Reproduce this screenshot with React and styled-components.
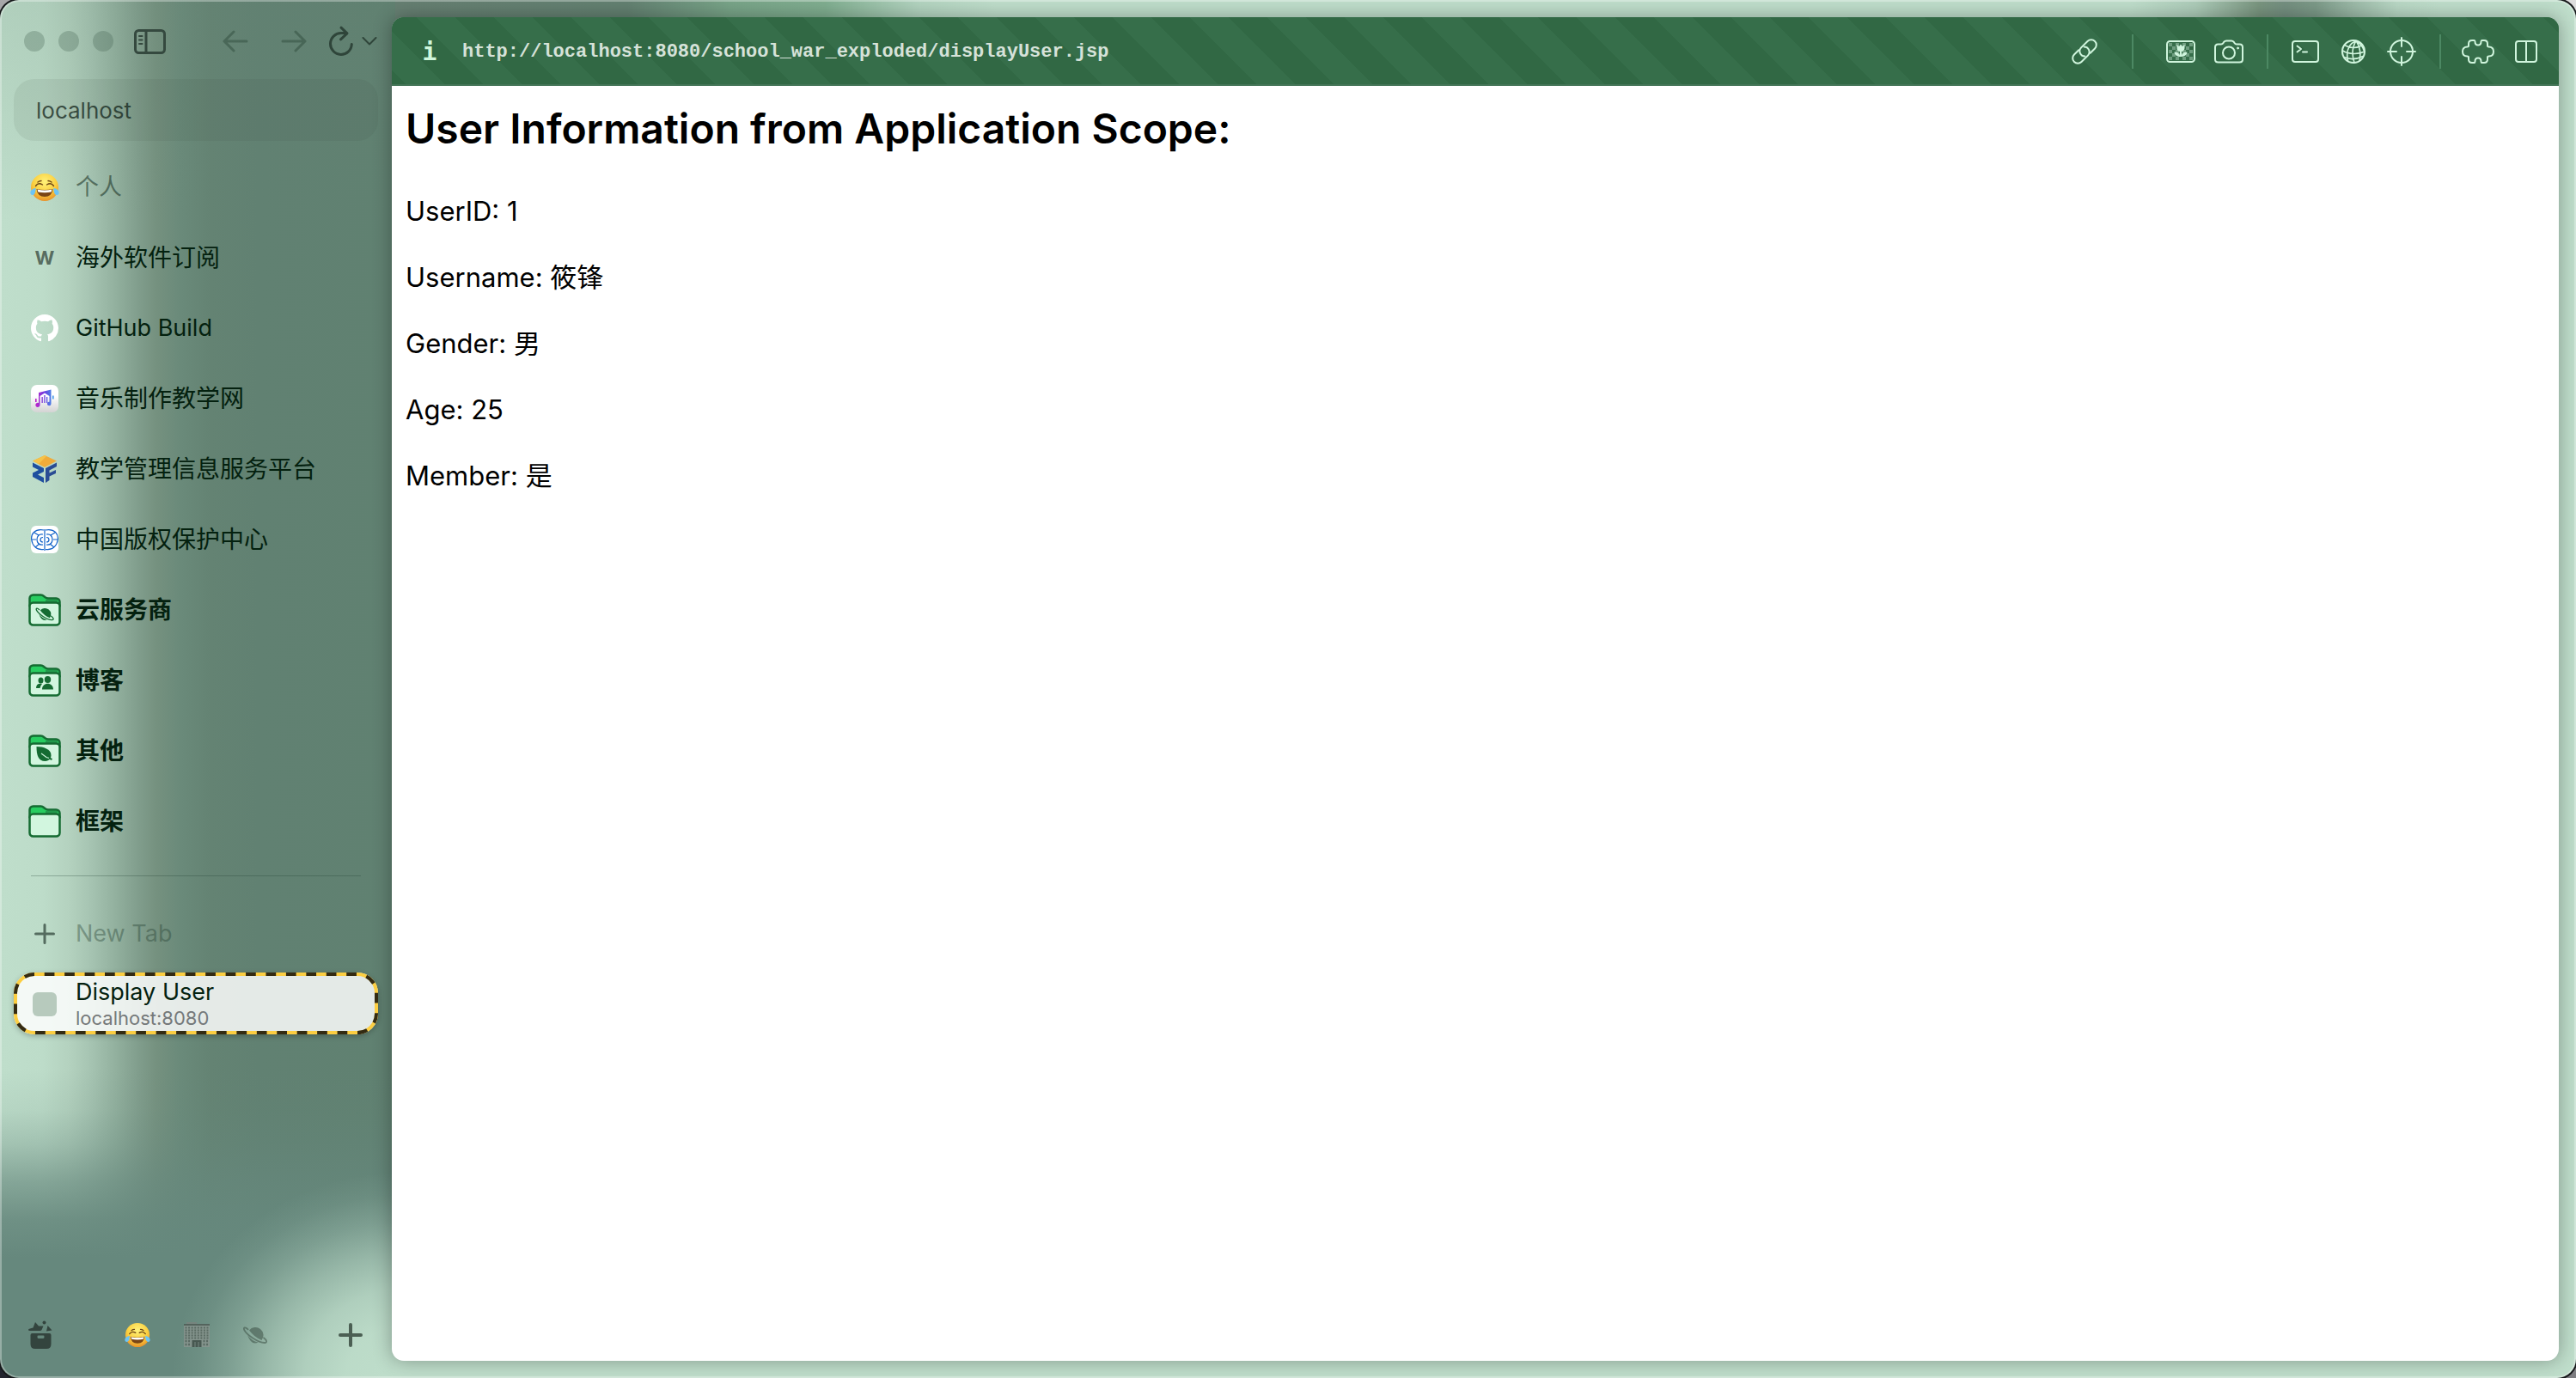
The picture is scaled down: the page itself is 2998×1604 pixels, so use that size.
import React from "react";
import styled, { createGlobalStyle, css } from "styled-components";

const GlobalStyle = createGlobalStyle`
  *, *::before, *::after { box-sizing: border-box; }
  body {
    margin: 0;
    background: linear-gradient(20deg, #23242e 0%, #23242e 10%, #9a9a9c 50%, #dedede 100%);
    font-family: Inter, "Noto Sans CJK SC", sans-serif;
  }
  button, input { font: inherit; }
  ul { list-style: none; margin: 0; padding: 0; }
`;

const ink = "#04210f";

const Window = styled.div`
  display: flex;
  min-height: 100vh;
  border: 2px solid rgba(255, 255, 255, 0.32);
  border-radius: 22px;
  box-shadow: 0 0 0 2px #16181a;
  background-color: #bfdecb;
  background-origin: border-box;
  background-repeat: no-repeat;
  background-image:
    radial-gradient(ellipse 270px 240px at 470px 100%, #bfdecb 0%, rgba(191, 222, 203, 0.96) 25%, rgba(191, 222, 203, 0.82) 43%, rgba(191, 222, 203, 0.55) 60%, rgba(191, 222, 203, 0.26) 76%, rgba(191, 222, 203, 0.08) 89%, rgba(191, 222, 203, 0) 100%),
    linear-gradient(to bottom, rgba(102, 136, 125, 0) 0%, rgba(102, 136, 125, 0.1) 22%, rgba(102, 136, 125, 0.32) 40%, rgba(102, 136, 125, 0.66) 60%, rgba(102, 136, 125, 0.9) 80%, #66887d 100%),
    linear-gradient(#66887d, #66887d),
    linear-gradient(to bottom, rgba(100, 130, 113, 0.16), rgba(100, 130, 113, 0) 100%),
    linear-gradient(to right, #bfdecb 0, #bddcc9 50px, #b4d2bf 80px, #a6c4b2 105px, #92b09e 135px, #819e8d 160px, #75917f 182px, #6a8a7a 210px, #648373 245px, #618172 300px, #608171 460px),
    linear-gradient(to right, #667f72 0, #638171 270px, #78a488 390px, #80ae90 500px, #b3d4c0 610px, #bfdecb 700px),
    linear-gradient(to right, #bfdecb 0, #adccb9 75px, #79957f 150px, #748f80 180px, #7c9a88 215px, #9cbaa8 260px, #b9d8c5 310px, #bfdecb 360px);
  background-size:
    100% 100%,
    460px 220px,
    460px 140px,
    460px 260px,
    460px 100%,
    700px 60px,
    360px 60px;
  background-position:
    0 0,
    left 0 bottom 140px,
    left 0 bottom 0,
    0 0,
    0 0,
    460px 0,
    right 158px top 0;
`;

const Sidebar = styled.nav`
  display: flex;
  flex-direction: column;
  flex: 0 0 454px;
  padding: 2px 16px 0 14px;
`;

const WindowBar = styled.div`
  display: flex;
  align-items: center;
  height: 88px;
  padding: 0 1px 0 12px;
`;

const Lights = styled.div`
  display: flex;
  gap: 16px;
  margin-right: 24px;
`;

const Light = styled.span`
  width: 24px;
  height: 24px;
  border-radius: 50%;
  background: rgba(70, 100, 84, 0.3);
`;

const NavGroup = styled.div`
  display: flex;
  align-items: center;
  gap: ${(p) => p.$gap}px;
  margin-left: ${(p) => p.$push || "auto"};
`;

const IconButton = styled.button`
  display: flex;
  align-items: center;
  justify-content: center;
  padding: 0;
  border: 0;
  background: none;
  color: ${(p) => p.$color || "#35493f"};
  cursor: pointer;
`;

const Address = styled.input`
  height: 72px;
  width: 100%;
  padding: 0 26px;
  border: 0;
  border-radius: 24px;
  outline: none;
  background: rgba(50, 60, 45, 0.08);
  color: rgba(20, 38, 28, 0.76);
  font-size: 26px;
`;

const TabList = styled.ul`
  display: flex;
  flex-direction: column;
  gap: 10px;
  margin-top: ${(p) => p.$top}px;
`;

const rowBase = css`
  position: relative;
  display: flex;
  align-items: center;
  gap: 20px;
  width: 100%;
  height: 72px;
  padding: 2px 20px 0;
  border: 0;
  border-radius: 24px;
  background: none;
  color: ${(p) => p.$color || ink};
  font-size: ${(p) => p.$size || 28}px;
  font-weight: ${(p) => p.$weight || 400};
  line-height: 32px;
  text-align: left;
  text-decoration: none;
  cursor: pointer;
`;

const RowLink = styled.a`
  ${rowBase}
`;

const RowButton = styled.button`
  ${rowBase}
`;

const ActiveTab = styled.a`
  ${rowBase}
  background: rgba(255, 255, 255, 0.83);
  box-shadow: 0 2px 6px rgba(0, 0, 0, 0.25);
`;

const IconSlot = styled.span`
  display: flex;
  align-items: center;
  justify-content: center;
  flex: none;
  width: 32px;
  height: 38px;

  svg { flex: none; }
`;

const Monogram = styled.span`
  color: rgba(60, 78, 68, 0.8);
  font-size: 22px;
  font-weight: 700;
`;

const TabTitles = styled.span`
  display: flex;
  flex-direction: column;
`;

const TabHost = styled.span`
  color: #75797a;
  font-size: 22px;
  line-height: 28px;
`;

const BlankFavicon = styled.span`
  width: 28px;
  height: 28px;
  border-radius: 6px;
  background: #b7cabd;
`;

const DashedFrame = styled.svg`
  position: absolute;
  inset: 0;
  width: 100%;
  height: 100%;
  pointer-events: none;

  rect {
    x: 2px;
    y: 2px;
    width: calc(100% - 4px);
    height: calc(100% - 4px);
    rx: 22px;
    fill: none;
    stroke-width: 4px;
  }
`;

const Divider = styled.hr`
  align-self: stretch;
  height: 1px;
  margin: 28px 20px 30px;
  border: 0;
  background: rgba(30, 60, 45, 0.3);
`;

const Dock = styled.footer`
  display: flex;
  align-items: center;
  height: 96px;
  margin-top: auto;
  padding: 0 18px 0 17px;
`;

const Panel = styled.section`
  display: flex;
  flex: 1;
  min-width: 0;
  flex-direction: column;
  margin: 18px 18px 18px 0;
  overflow: hidden;
  border-radius: 14px;
  background: #fff;
  box-shadow: 0 0 22px rgba(0, 0, 0, 0.32);
`;

const Toolbar = styled.header`
  display: flex;
  align-items: center;
  height: 80px;
  padding: 0 10px 0 34px;
  box-shadow: inset 0 -2px 0 #447557;
  color: #d0f5dd;
  background-color: #316844;
  background-image: linear-gradient(45deg, #316844 25%, #366e4a 25%, #366e4a 50%, #316844 50%, #316844 75%, #366e4a 75%);
  background-position: -16px 0;
  background-size: 90px 90px;
`;

const InfoButton = styled.button`
  width: 20px;
  padding: 0;
  border: 0;
  background: none;
  color: #cff7dc;
  cursor: pointer;
  && {
    font-family: "DejaVu Sans Mono", monospace;
    font-size: 28px;
    font-weight: 700;
  }
`;

const Url = styled.a`
  flex: 1;
  margin-left: 28px;
  color: #d6e2d9;
  font-family: "Liberation Mono", monospace;
  font-size: 22px;
  font-weight: 700;
  text-decoration: none;
`;

const ToolGroup = styled.div`
  display: flex;
`;

const ToolButton = styled(IconButton)`
  width: 56px;
  height: 56px;
  color: #d0f5dd;
`;

const Separator = styled.span`
  width: 2px;
  height: 40px;
  margin: ${(p) => (p.$wide ? "0 27px" : "0 15px 0 16px")};
  background: #4c8863;
`;

const Page = styled.main`
  padding: 22px 16px;
  color: #000;
`;

const Heading = styled.h2`
  margin: 0 0 45px;
  font-size: 48px;
  font-weight: 600;
  line-height: 56px;
`;

const Field = styled.p`
  margin: 0 0 32px;
  font-size: 31px;
  line-height: 45px;
`;

const Stroke = ({ w, h, sw = 2, children }) => (
  <svg
    width={w}
    height={h}
    viewBox={`0 0 ${w} ${h}`}
    fill="none"
    stroke="currentColor"
    strokeWidth={sw}
    strokeLinecap="round"
    strokeLinejoin="round"
    aria-hidden="true"
  >
    {children}
  </svg>
);

const SidebarIcon = () => (
  <Stroke w={37} h={29} sw={3}>
    <rect x="1.5" y="1.5" width="34" height="26" rx="4" />
    <path d="M14 2v25" />
    <path d="M6 8h3.5M6 12.5h3.5M6 17h3.5" strokeWidth="2" />
  </Stroke>
);

const BackIcon = () => (
  <Stroke w={30} h={26} sw={3}>
    <path d="M28 13H2M13 2 2 13l11 11" />
  </Stroke>
);

const ForwardIcon = () => (
  <Stroke w={30} h={26} sw={3}>
    <path d="M2 13h26M17 2l11 11-11 11" />
  </Stroke>
);

const ReloadIcon = () => (
  <Stroke w={28} h={36} sw={3}>
    <path d="M26.3 21.5A12.4 12.4 0 1 1 14 8.6h6" />
    <path d="M14 2.2l7 6.6-7.5 7" />
  </Stroke>
);

const ChevronIcon = () => (
  <Stroke w={18} h={10} sw={2}>
    <path d="M1.500 1 9 8.500 16.500 1" />
  </Stroke>
);

const PlusIcon = ({ size, sw }) => (
  <Stroke w={size} h={size} sw={sw}>
    <path d={`M${size / 2} ${sw / 2}V${size - sw / 2}M${sw / 2} ${size / 2}H${size - sw / 2}`} />
  </Stroke>
);

const JoyIcon = ({ size = 34, id }) => (
  <svg width={size} height={size} viewBox="0 0 34 34" aria-hidden="true">
    <defs>
      <radialGradient id={id} cx="50%" cy="30%" r="70%">
        <stop offset="0" stopColor="#fff27a" />
        <stop offset="0.6" stopColor="#fbcf3f" />
        <stop offset="1" stopColor="#e8922a" />
      </radialGradient>
    </defs>
    <circle cx="17" cy="17" r="16" fill={`url(#${id})`} />
    <path d="M6.500 15.500q3-4.500 8-1.500M27.500 15.500q-3-4.500-8-1.500M9 11q2-1.500 4-1.500M25 11q-2-1.500-4-1.500" fill="none" stroke="#6b4414" strokeWidth="1.400" strokeLinecap="round" />
    <path d="M7.500 19q9.500 2 19 0-1 9-9.500 9T7.500 19z" fill="#7a4516" />
    <path d="M8.500 19.500q8.500 2 17 0l-.8 3q-7.700 1.600-15.400 0z" fill="#fff" />
    <path d="M6.800 18C2 18.500.2 21.500.4 23.800c.2 2.600 3.800 3 5 .6.800-1.800 1.100-4 1.400-6.400zM27.200 18c4.800.5 6.600 3.500 6.400 5.800-.2 2.600-3.800 3-5 .6-.8-1.800-1.100-4-1.400-6.400z" fill="#6cc4f6" />
  </svg>
);

const GithubIcon = () => (
  <svg width="32" height="32" viewBox="0 0 16 16" fill="#fff" aria-hidden="true">
    <path d="M8 0C3.580 0 0 3.580 0 8c0 3.540 2.290 6.530 5.470 7.590.4.070.55-.17.55-.38 0-.19-.01-.82-.01-1.490-2.010.37-2.530-.49-2.690-.94-.09-.23-.48-.94-.82-1.130-.28-.15-.68-.52-.01-.53.63-.01 1.080.58 1.230.82.72 1.210 1.870.87 2.330.66.070-.52.28-.87.510-1.070-1.780-.2-3.640-.89-3.640-3.950 0-.87.31-1.590.82-2.150-.08-.2-.36-1.020.08-2.120 0 0 .67-.21 2.200.82.64-.18 1.320-.27 2-.27.68 0 1.360.09 2 .27 1.530-1.040 2.200-.82 2.200-.82.44 1.100.16 1.920.08 2.120.51.56.82 1.270.82 2.150 0 3.070-1.870 3.750-3.650 3.950.29.25.54.73.54 1.480 0 1.070-.01 1.930-.01 2.200 0 .21.15.46.55.38A8.013 8.013 0 0 0 16 8c0-4.420-3.580-8-8-8z" />
  </svg>
);

const MusicIcon = () => (
  <svg width="32" height="32" viewBox="0 0 32 32" aria-hidden="true">
    <defs>
      <linearGradient id="tile" x1="0" y1="0" x2="0" y2="1">
        <stop offset="0.4" stopColor="#fff" />
        <stop offset="1" stopColor="#d3d3d3" />
      </linearGradient>
      <linearGradient id="note" gradientUnits="userSpaceOnUse" x1="5" y1="0" x2="27" y2="0">
        <stop offset="0" stopColor="#c424c8" />
        <stop offset="0.5" stopColor="#6a3fe0" />
        <stop offset="1" stopColor="#3fa0e8" />
      </linearGradient>
    </defs>
    <rect width="32" height="32" rx="7" fill="url(#tile)" />
    <g fill="url(#note)">
      <path d="M9 9 23.500 5.500V22a2.300 2.300 0 1 1-2-2.300V13l-5.500-3.500L10.500 13v10A2.600 2.600 0 1 1 9 21z" />
      <rect x="5" y="16" width="1.600" height="4" />
      <rect x="12.500" y="14" width="1.300" height="7" />
      <rect x="15.300" y="12" width="1.300" height="9" />
      <rect x="18" y="14" width="1.300" height="7" />
      <rect x="25" y="12.500" width="1.600" height="4" />
    </g>
  </svg>
);

const CubeIcon = () => (
  <svg width="32" height="32" viewBox="0 0 32 32" aria-hidden="true">
    <path d="M16 0 30 6.500 16 14 2 6.500z" fill="#f0ab3a" />
    <path d="M16 0 2 6.500 9 10l9-9z" fill="#f5c34a" />
    <path d="M2 8.500 15 15v4l-7 3.500 7 3.500v6L2 25v-4.500l7-3.500-7-3.500z" fill="#1f4f9f" />
    <path d="M17 15 30 8.500v4.500l-8.500 4.500v3L29 17v4l-7.500 3.500V29L17 32z" fill="#2a4c94" />
  </svg>
);

const EmblemIcon = () => (
  <svg width="32" height="32" viewBox="0 0 32 32" aria-hidden="true">
    <rect width="32" height="32" rx="6" fill="#fff" />
    <g fill="none" stroke="#1263c8" strokeWidth="1.200">
      <path d="M15 5C4 3 0 10 .7 16S6 29 15 27.500M17 5c11-2 15 5 14.300 11S26 29 17 27.500" />
      <path d="M16 4v25M1 16h5M26 16h5M4 8l5 3M28 8l-5 3M5 25l5-4M27 25l-5-4" />
      <path d="M14 10c-5-1-7 3-7 6s2 7 7 6M18 10c5-1 7 3 7 6s-2 7-7 6" />
      <path d="M14 13.500c-4 0-4 5.500 0 5.500M18 13.500c4 0 4 5.500 0 5.500" />
    </g>
  </svg>
);

const PlanetShape = () => (
  <>
    <path d="M7 6A9.200 9.200 0 1 1 21.500 17.500Q13 14 7 6z" />
    <path d="M5 11.500q5 7 12.500 8.500-8 4-12.500-8.500z" />
    <path d="M5.500 4.800C2.500 1.800-.2 2.500 1.300 5.600 4 11 17 20.500 25 20.500c3.500-.1 2.300-3.300-1-5.800" fill="none" stroke="currentColor" strokeWidth="1.800" strokeLinecap="round" />
  </>
);

const PlanetIcon = () => (
  <svg width="28" height="24" viewBox="0 0 28 23" fill="currentColor" aria-hidden="true">
    <PlanetShape />
  </svg>
);

const badges = {
  planet: (
    <g transform="translate(8.500 15) scale(0.76)">
      <PlanetShape />
    </g>
  ),
  people: (
    <>
      <ellipse cx="14.500" cy="19" rx="3" ry="3.500" />
      <ellipse cx="22.500" cy="18" rx="3.700" ry="4" />
      <path d="M16 29.500c0-9 13-9 13 0zM9 28q0-6 7-5-2 2-2.500 5z" />
    </>
  ),
  leaf: (
    <>
      <path d="M9.500 14c8 0 17 3 17 10 0 3-2 7-7 7-8 0-10-7-10-17z" />
      <path d="m15 22 6 4.500 5 1.500" fill="none" stroke="#d2f6df" strokeWidth="1.200" />
      <path d="m24 27.500 3.500 1.500" stroke="currentColor" strokeWidth="2" />
    </>
  ),
};

const FolderIcon = ({ badge }) => (
  <svg width="38" height="38" viewBox="0 0 38 38" color="#156b32" fill="currentColor" aria-hidden="true">
    <path d="M1.500 14V5.500a4 4 0 0 1 4-4h9q2 0 3.500 1.500l2 1.500q1.500 1 3 1h9.500a4 4 0 0 1 4 4V14z" fill="#28cc60" stroke="currentColor" strokeWidth="2.500" />
    <path d="M20 7h14v3H20z" fill="#22994c" />
    <rect x="1.500" y="10.500" width="35" height="26" rx="4" fill="#d2f6df" stroke="currentColor" strokeWidth="2.500" />
    {badges[badge]}
  </svg>
);

const ArchiveIcon = () => (
  <svg width="28" height="34" viewBox="0 0 28 34" fill="currentColor" aria-hidden="true">
    <circle cx="18.500" cy="2.500" r="2" />
    <path d="M2 9.500 5.500 8.500 8 2l4 4.500h5.500l-2 4.500q-.6 1-2 1H1.500Q0 12 0 10.800 0 10 2 9.500zM22.500 6l5 5.500-6.500 1z" />
    <path fillRule="evenodd" d="M4.500 15h20q2 0 2 2v10.500q0 5.500-5.500 5.500H8q-5.500 0-5.500-5.500V17q0-2 2-2zm7 2.500q-1 0-1 1v1q0 1.500 1.500 1.500h5q1.500 0 1.500-1.500v-1q0-1-1-1z" />
  </svg>
);

const BuildingIcon = () => (
  <svg width="30" height="30" viewBox="0 0 30 30" aria-hidden="true" opacity="0.8">
    <path d="M3 0h12v3H3z" fill="#7a837e" />
    <path d="M0 2h30v27H0z" fill="#8a958f" />
    <path d="M0 2h30v2H0z" fill="#4f5a54" />
    {[6, 9, 12, 15, 18].map((y) => (
      <path key={y} d={`M1.500 ${y + 0.5}h27`} stroke="#55625b" strokeWidth="2" strokeDasharray="2 1.570" />
    ))}
    <path d="M1.500 22h6M22.500 22h6M1.500 26h6M22.500 26h6" stroke="#55625b" strokeWidth="2.400" strokeDasharray="2 1.570" />
    <path d="M9.500 21h11v8h-11z" fill="#3f4b45" />
    <path d="M13 23v6M17 23v6" stroke="#7b8781" strokeWidth="1" />
  </svg>
);

const LinkIcon = () => (
  <svg width="30" height="30" viewBox="-15 -15 30 30" fill="none" stroke="currentColor" strokeWidth="2" strokeLinecap="round" aria-hidden="true">
    <g transform="rotate(-45)">
      <path d="M-3.500-6H-11a6 6 0 0 0 0 12H-.5A6 6 0 0 0 3.700-4.200" />
      <path d="M3.500 6H11a6 6 0 0 0 0-12H.5A6 6 0 0 0-3.700 4.200" />
    </g>
  </svg>
);

const TulipIcon = () => (
  <svg width="34" height="26" viewBox="0 0 34 26" aria-hidden="true">
    <g fill="#6f9e80">
      {[0, 1, 2, 3, 4, 5, 6].map((c) =>
        [0, 1, 2, 3, 4].map((r) =>
          (c + r) % 2 === 0 ? <rect key={`${c}-${r}`} x={3 + c * 4} y={3 + r * 4} width="4" height="4" /> : null
        )
      )}
    </g>
    <rect x="1" y="1" width="32" height="24" rx="3.500" fill="none" stroke="currentColor" strokeWidth="2" />
    <path d="M12.500 5l2.500 2 2-2.500L19 7l2.500-2v4q0 3.500-3.500 4v4.500c1-2.500 3-4 6.500-4-.5 4-3.500 5.500-7.500 5.500s-7-1.500-7.500-5.500c3.500 0 5.500 1.500 6.500 4V13q-3.500-.5-3.500-4z" fill="currentColor" />
  </svg>
);

const CameraIcon = () => (
  <Stroke w={34} h={28}>
    <path d="M4.500 5.500H8q1.500 0 2.500-1.500l.8-1.200Q12.500 1.500 14 1.500h6q1.500 0 2.700 1.300l.8 1.200q1 1.500 2.500 1.500h3.500Q33 5.500 33 9v14q0 3.500-3.500 3.500h-25Q1 26.500 1 23V9q0-3.500 3.500-3.500z" />
    <circle cx="17" cy="15.500" r="7" />
    <circle cx="27.500" cy="10" r="1" fill="currentColor" strokeWidth="1" />
  </Stroke>
);

const TerminalIcon = () => (
  <Stroke w={32} h={26}>
    <rect x="1" y="1" width="30" height="24" rx="3" />
    <path d="m6.500 6.500 4.500 3.500-4.500 3.500M13 13.500h5" />
  </Stroke>
);

const GlobeIcon = () => (
  <Stroke w={28} h={28}>
    <circle cx="14" cy="14" r="13" />
    <path d="M17 1.500C9 5 5 13 7.500 25M17 1.500C12.500 9 12 18 15 27M17 1.500c4 6 6 14 4 23M17 1.500c5 3 8 7 9 11" strokeWidth="1.600" />
    <path d="M3.500 6.500c6 3.500 14 4 21 0M1.500 13c7 4.500 18 4.500 25.500 1M3 20.500c7 3 15 2.500 22-1" strokeWidth="1.600" />
  </Stroke>
);

const TargetIcon = () => (
  <Stroke w={34} h={34}>
    <circle cx="17" cy="17" r="13" />
    <path d="M17 1v10M17 23v10M1 17h10M23 17h10" />
  </Stroke>
);

const PuzzleIcon = () => (
  <Stroke w={38} h={28}>
    <path d="M8 5q0-4 4-4h2.500q1 0 1 1.500c0 2 1 4 3.500 4s3.500-2 3.500-4Q22.500 1 23.500 1H26q4 0 4 4v2.500q0 1 1.500 1c4 0 5.500 2.500 5.500 5.500s-1.500 5.500-5.500 5.500q-1.500 0-1.500 1V23q0 4-4 4h-2.500q-1 0-1-1.500c0-2-1-4-3.500-4s-3.500 2-3.500 4q0 1.500-1 1.500H12q-4 0-4-4v-2.500q0-1-1.500-1C2.500 19.500 1 17 1 14s1.500-5.500 5.500-5.500q1.500 0 1.500-1z" />
  </Stroke>
);

const SplitIcon = () => (
  <Stroke w={26} h={26}>
    <rect x="1" y="1" width="24" height="24" rx="3" />
    <path d="M13 1v24" />
  </Stroke>
);

const bookmarks = [
  { label: "海外软件订阅", icon: <Monogram>W</Monogram> },
  { label: "GitHub Build", icon: <GithubIcon />, size: 27 },
  { label: "音乐制作教学网", icon: <MusicIcon /> },
  { label: "教学管理信息服务平台", icon: <CubeIcon /> },
  { label: "中国版权保护中心", icon: <EmblemIcon /> },
];

const folders = [
  { label: "云服务商", badge: "planet" },
  { label: "博客", badge: "people" },
  { label: "其他", badge: "leaf" },
  { label: "框架" },
];

const fields = [
  ["UserID", "1"],
  ["Username", "筱锋"],
  ["Gender", "男"],
  ["Age", "25"],
  ["Member", "是"],
];

const faded = "rgba(35, 62, 48, 0.4)";

export default function App() {
  return (
    <>
      <GlobalStyle />
      <Window lang="zh-CN">
        <Sidebar>
          <WindowBar>
            <Lights>
              <Light />
              <Light />
              <Light />
            </Lights>
            <IconButton aria-label="Toggle sidebar"><SidebarIcon /></IconButton>
            <NavGroup $gap={38}>
              <IconButton $color={faded} aria-label="Back"><BackIcon /></IconButton>
              <IconButton $color={faded} aria-label="Forward"><ForwardIcon /></IconButton>
            </NavGroup>
            <NavGroup $gap={10} $push="26px">
              <IconButton $color="#2f453a" aria-label="Reload"><ReloadIcon /></IconButton>
              <IconButton $color="#2f453a" aria-label="Reload options"><ChevronIcon /></IconButton>
            </NavGroup>
          </WindowBar>

          <Address aria-label="Address" defaultValue="localhost" />

          <TabList $top={17}>
            <li>
              <RowButton $color="rgba(30, 55, 42, 0.6)" $size={27}>
                <IconSlot><JoyIcon id="joy-space" /></IconSlot>
                个人
              </RowButton>
            </li>
            {bookmarks.map((b) => (
              <li key={b.label}>
                <RowLink href="#" $size={b.size}>
                  <IconSlot>{b.icon}</IconSlot>
                  {b.label}
                </RowLink>
              </li>
            ))}
            {folders.map((f) => (
              <li key={f.label}>
                <RowButton $weight={600}>
                  <IconSlot><FolderIcon badge={f.badge} /></IconSlot>
                  {f.label}
                </RowButton>
              </li>
            ))}
          </TabList>

          <Divider />

          <TabList $top={0}>
            <li>
              <RowButton $color={faded} $size={27}>
                <IconSlot>
                  <IconButton as="span" $color="rgba(40, 60, 50, 0.7)"><PlusIcon size={24} sw={3} /></IconButton>
                </IconSlot>
                New Tab
              </RowButton>
            </li>
            <li>
              <ActiveTab href="#" aria-current="page" $size={27}>
                <IconSlot><BlankFavicon /></IconSlot>
                <TabTitles>
                  Display User
                  <TabHost>localhost:8080</TabHost>
                </TabTitles>
                <DashedFrame aria-hidden="true">
                  <rect stroke="#fcce42" />
                  <rect stroke="#332a12" pathLength="80" strokeDasharray="1 1" strokeDashoffset="1" />
                </DashedFrame>
              </ActiveTab>
            </li>
          </TabList>

          <Dock>
            <IconButton $color="#33443e" aria-label="Archive"><ArchiveIcon /></IconButton>
            <NavGroup $gap={39}>
              <IconButton aria-label="Personal space"><JoyIcon size={30} id="joy-dock" /></IconButton>
              <IconButton aria-label="Work space"><BuildingIcon /></IconButton>
              <IconButton $color="rgba(60, 80, 70, 0.55)" aria-label="Planet space"><PlanetIcon /></IconButton>
            </NavGroup>
            <NavGroup $gap={0}>
              <IconButton $color="#4b5f53" aria-label="New space"><PlusIcon size={28} sw={4} /></IconButton>
            </NavGroup>
          </Dock>
        </Sidebar>

        <Panel>
          <Toolbar>
            <InfoButton aria-label="Site information">i</InfoButton>
            <Url href="#">http://localhost:8080/school_war_exploded/displayUser.jsp</Url>
            <ToolButton aria-label="Copy link"><LinkIcon /></ToolButton>
            <Separator $wide />
            <ToolGroup>
              <ToolButton aria-label="Image tools"><TulipIcon /></ToolButton>
              <ToolButton aria-label="Capture"><CameraIcon /></ToolButton>
            </ToolGroup>
            <Separator />
            <ToolGroup>
              <ToolButton aria-label="Console"><TerminalIcon /></ToolButton>
              <ToolButton aria-label="Network"><GlobeIcon /></ToolButton>
              <ToolButton aria-label="Inspect element"><TargetIcon /></ToolButton>
            </ToolGroup>
            <Separator />
            <ToolGroup>
              <ToolButton aria-label="Extensions"><PuzzleIcon /></ToolButton>
              <ToolButton aria-label="Split view"><SplitIcon /></ToolButton>
            </ToolGroup>
          </Toolbar>
          <Page>
            <Heading>User Information from Application Scope:</Heading>
            {fields.map(([name, value]) => (
              <Field key={name}>{name}: {value}</Field>
            ))}
          </Page>
        </Panel>
      </Window>
    </>
  );
}
